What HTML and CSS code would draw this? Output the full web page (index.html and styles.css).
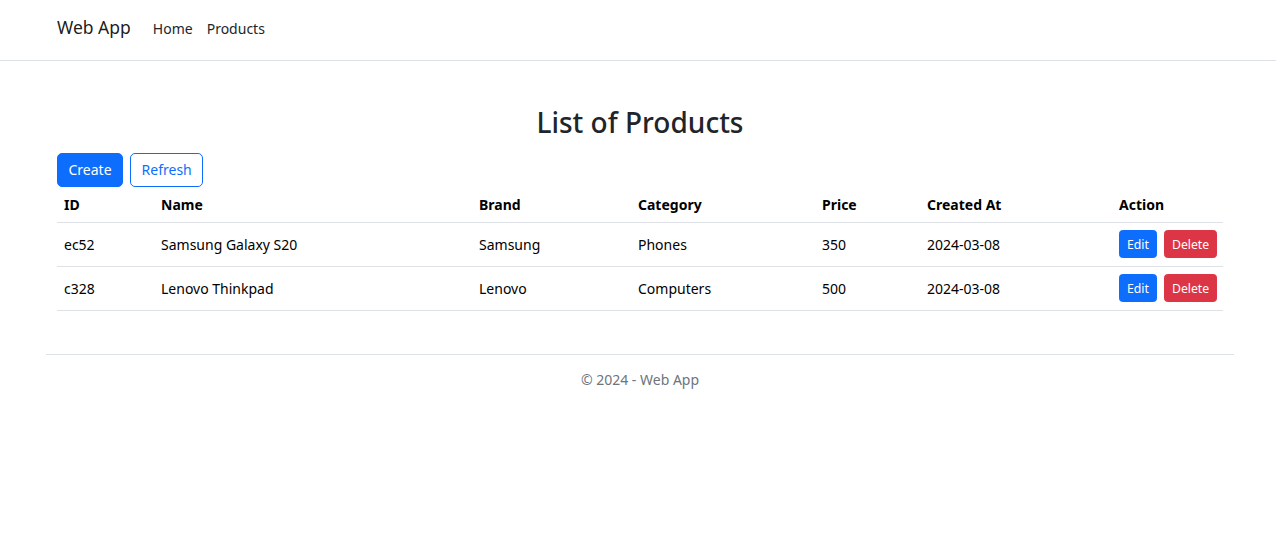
FILE: index.html
```html
<!DOCTYPE html>
<html lang="en">
<head>
<meta charset="utf-8">
<title>Web App</title>
<link rel="stylesheet" href="styles.css">
</head>
<body>
<header class="navbar">
  <div class="wrap nav-inner">
    <a class="brand" href="#">Web App</a>
    <nav class="nav-links">
      <a class="nav-link" href="#">Home</a>
      <a class="nav-link" href="#">Products</a>
    </nav>
  </div>
</header>

<main class="wrap content">
  <h2 class="title">List of Products</h2>
  <div class="toolbar">
    <a class="btn btn-primary" href="#">Create</a>
    <a class="btn btn-outline" href="#">Refresh</a>
  </div>
  <table class="table">
    <colgroup>
      <col class="c-id"><col class="c-name"><col class="c-brand"><col class="c-cat"><col class="c-price"><col class="c-date"><col class="c-action">
    </colgroup>
    <thead>
      <tr>
        <th>ID</th><th>Name</th><th>Brand</th><th>Category</th><th>Price</th><th>Created At</th><th>Action</th>
      </tr>
    </thead>
    <tbody>
      <tr>
        <td>ec52</td><td>Samsung Galaxy S20</td><td>Samsung</td><td>Phones</td><td>350</td><td>2024-03-08</td>
        <td class="actions"><a class="btn btn-sm btn-primary" href="#">Edit</a><a class="btn btn-sm btn-danger" href="#">Delete</a></td>
      </tr>
      <tr>
        <td>c328</td><td>Lenovo Thinkpad</td><td>Lenovo</td><td>Computers</td><td>500</td><td>2024-03-08</td>
        <td class="actions"><a class="btn btn-sm btn-primary" href="#">Edit</a><a class="btn btn-sm btn-danger" href="#">Delete</a></td>
      </tr>
    </tbody>
  </table>
</main>

<footer class="footer">
  <div class="footer-inner">&copy; 2024 - Web App</div>
</footer>
</body>
</html>
```

FILE: styles.css
```css
* { box-sizing: border-box; }

html { font-size: 14px; }

body {
  margin: 0;
  font-family: "Noto Sans", "Open Sans", sans-serif;
  font-size: 14px;
  line-height: 1.5;
  color: #212529;
  background: #fff;
}

a { text-decoration: none; }

.wrap {
  width: 1166px;
  margin-left: 57px;
}

.navbar {
  height: 61px;
  border-bottom: 1px solid #dee2e6;
}

.nav-inner {
  height: 60px;
  display: flex;
  align-items: center;
}

.brand {
  font-size: 17.5px;
  color: rgba(0, 0, 0, .9);
  margin-right: 22px;
  line-height: 1;
  padding-bottom: 4px;
}

.nav-links {
  display: flex;
  gap: 14px;
}

.nav-link {
  color: #212529;
  font-size: 14px;
  padding-bottom: 4px;
}

.content {
  padding-top: 45px;
}

.title {
  margin: 0 0 13px;
  font-size: 28px;
  font-weight: 500;
  line-height: 1.2;
  text-align: center;
}

.toolbar {
  display: flex;
  gap: 7px;
}

.btn {
  display: inline-block;
  font-size: 14px;
  line-height: 22px;
  padding: 5px 10.5px;
  border: 1px solid transparent;
  border-radius: 5px;
  text-align: center;
}

.btn-primary { background: #0d6efd; border-color: #0d6efd; color: #fff; }
.btn-outline { background: #fff; border-color: #0d6efd; color: #0d6efd; }
.btn-danger { background: #dc3545; border-color: #dc3545; color: #fff; }

.btn-sm {
  font-size: 12.25px;
  line-height: 19px;
  padding: 3.5px 7px;
  border-radius: 3.5px;
}

.table {
  width: 1166px;
  border-collapse: collapse;
  table-layout: fixed;
  color: #000;
  margin-bottom: 0;
}

.c-id { width: 97px; }
.c-name { width: 318px; }
.c-brand { width: 159px; }
.c-cat { width: 184px; }
.c-price { width: 105px; }
.c-date { width: 192px; }
.c-action { width: 111px; }

.table th,
.table td {
  text-align: left;
  padding: 7px;
  border-bottom: 1px solid #dee2e6;
  vertical-align: middle;
}

.table th { font-weight: 700; }

.table td { padding: 7.5px 7px 7.5px; }

.actions {
  white-space: nowrap;
}

.actions .btn + .btn { margin-left: 7px; }

.footer {
  margin: 43px 42px 0 46px;
  border-top: 1px solid #dee2e6;
}

.footer-inner {
  text-align: center;
  color: #6c757d;
  font-size: 14px;
  line-height: 21px;
  padding-top: 14px;
}
```
